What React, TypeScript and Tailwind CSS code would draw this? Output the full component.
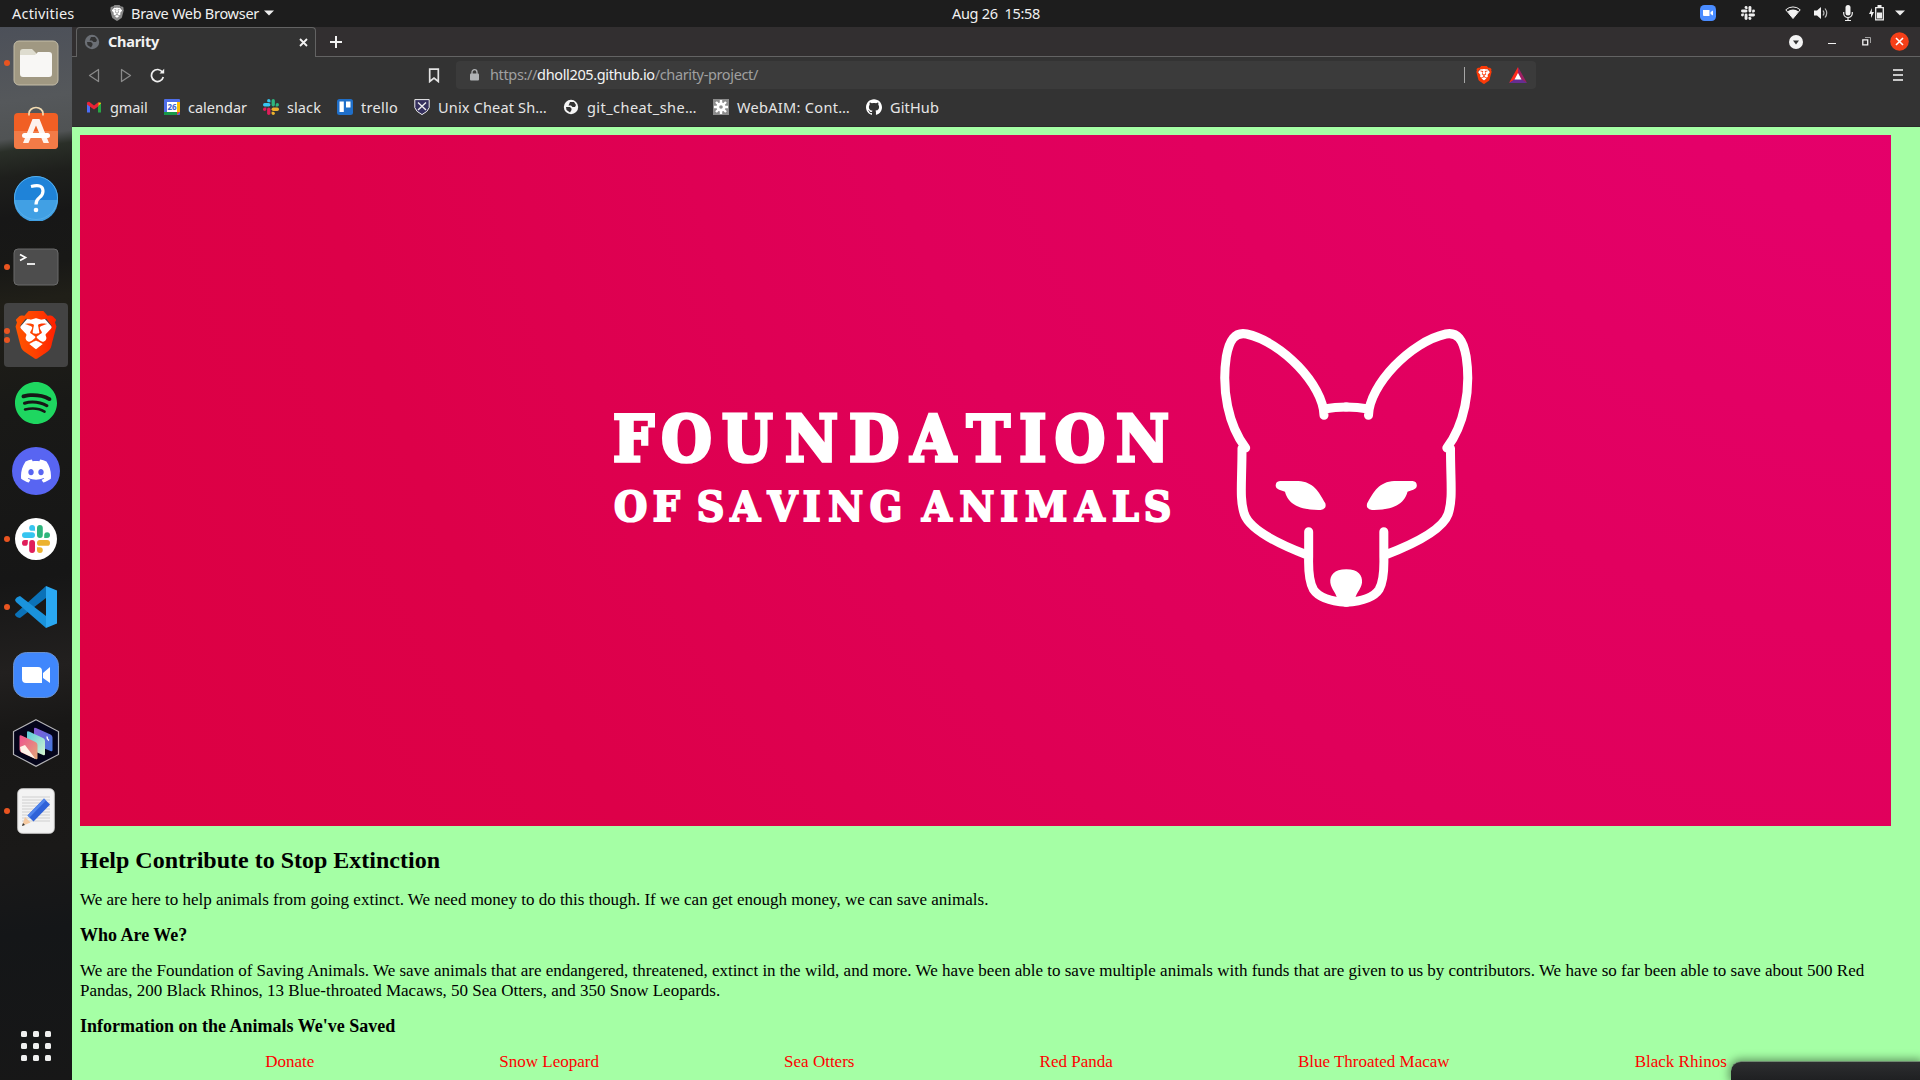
import { useLayoutEffect, useRef, type ReactNode } from "react";
import { SiBrave, SiSpotify, SiDiscord, SiGithub } from "react-icons/si";

/* Text run whose tracking is computed so that it fills the given width. */
function Fit({ w, className = "", children }: { w: number; className?: string; children: ReactNode }) {
  const ref = useRef<HTMLSpanElement>(null);
  useLayoutEffect(() => {
    const el = ref.current;
    if (!el) return;
    el.style.letterSpacing = "0px";
    const n = (el.textContent || "").length;
    el.style.letterSpacing = `${(w - el.getBoundingClientRect().width) / n}px`;
  }, [w]);
  return (
    <span ref={ref} className={`inline-block whitespace-pre ${className}`}>
      {children}
    </span>
  );
}

function SlackMark({ size, mono = false }: { size: number; mono?: boolean }) {
  const c = mono ? ["#eee", "#eee", "#eee", "#eee"] : ["#36c5f0", "#2eb67d", "#ecb22e", "#e01e5a"];
  return (
    <svg width={size} height={size} viewBox="0 0 28 28">
      {c.map((fill, i) => (
        <g key={i} fill={fill} transform={`rotate(${i * 90} 14 14)`}>
          <rect x="0" y="7.2" width="13" height="5.8" rx="2.9" />
          <path d="M13 5.8h-2.9A2.9 2.9 0 1 1 13 2.9z" />
        </g>
      ))}
    </svg>
  );
}

/* Brave shield: a coloured mask laid over a white face. */
function BraveMark({ size, tone }: { size: string; tone: string }) {
  return (
    <span className={`relative flex ${size}`}>
      <svg className="absolute inset-0 size-full" viewBox="0 0 24 24">
        <defs>
          <linearGradient id="braveFill" x1="0" x2="1">
            <stop offset="0" stopColor="#ff5601" />
            <stop offset=".5" stopColor="#ff4000" />
            <stop offset="1" stopColor="#ff1f01" />
          </linearGradient>
        </defs>
        <path d="M8 3.500h8l4 4.500-2 8-6 5-6-5-2-8z" fill="#fff" />
      </svg>
      <SiBrave className={`relative size-full ${tone}`} />
    </span>
  );
}

function TopBar() {
  return (
    <header className="flex h-[27px] shrink-0 items-center bg-[#1d1d1d] text-[14.5px] leading-none text-[#f0f0f0]">
      <div className="flex w-1/2 items-center pl-3">
        <div className="w-[97px]">
          <Fit w={62.500}>Activities</Fit>
        </div>
        <span className="mr-[6px] mb-px"><BraveMark size="size-4" tone="fill-[#8b8b8b]" /></span>
        <Fit w={128}>Brave Web Browser</Fit>
        <svg className="mb-px ml-[5px]" width="10" height="6" viewBox="0 0 10 6">
          <path d="M0 .5h10L5 5.500z" fill="#eee" />
        </svg>
      </div>
      <div className="-ml-2 flex-1">
        <Fit w={88}>Aug 26  15:58</Fit>
      </div>
      <div className="flex w-[220px] items-center pb-px">
        <svg width="16" height="16" viewBox="0 0 16 16">
          <rect width="16" height="16" rx="4.500" fill="#4a8cff" />
          <path d="M3 5h6.500v6H4a1 1 0 0 1-1-1zM10.500 7L13 5.500v5L10.500 9z" fill="#fff" />
        </svg>
        <span className="ml-[25px]"><SlackMark size={14} mono /></span>
        <svg className="ml-[30px]" width="16" height="14" viewBox="0 0 16 14">
          <path d="M.8 3.800a10.500 10.500 0 0 1 14.400 0L8 12.500z" fill="none" stroke="#eee" strokeWidth="1" />
          <path d="M2.500 5.500a8.500 8.500 0 0 1 11 0L8 12.500z" fill="#f2f2f2" />
        </svg>
        <svg className="ml-[13px]" width="16" height="14" viewBox="0 0 16 14">
          <path d="M0 4.500h3L7 1v12L3 9.500H0z" fill="#f2f2f2" />
          <path d="M9 4.500q2 2.500 0 5M11 2.500q3.500 4.500 0 9" fill="none" stroke="#bbb" strokeWidth="1.200" />
        </svg>
        <svg className="ml-[13px]" width="10" height="16" viewBox="0 0 10 16">
          <rect x="2.500" y="0" width="5" height="10.500" rx="2.500" fill="#f2f2f2" />
          <path d="M.7 7v1.500a4.300 4 0 0 0 8.600 0V7M5 12.500V15.500M2 15.500h6" fill="none" stroke="#eee" strokeWidth="1.200" />
        </svg>
        <svg className="ml-[16px]" width="15" height="16" viewBox="0 0 15 16">
          <path d="M3 3L0 9h2v4L5 7H2.800z" fill="#eee" />
          <path d="M6.700 2.700h7.600v12.100H6.700z" fill="none" stroke="#eee" strokeWidth="1.300" />
          <path d="M8.500 0h4v2.500h-4zM8 7.500h5v6H8z" fill="#eee" />
        </svg>
        <svg className="ml-[11px]" width="10" height="6" viewBox="0 0 10 6">
          <path d="M0 .5h10L5 5.500z" fill="#eee" />
        </svg>
      </div>
    </header>
  );
}

function FilesIcon() {
  return (
    <svg width="46" height="46" viewBox="0 0 46 46">
      <rect x="1" y="1" width="44" height="44" rx="5" fill="#a09882" stroke="#c4bda8" />
      <path d="M7 12q0-3 3-3h9l4 4v7H7z" fill="#dedccf" />
      <path d="M7 15h15l3-3h11q3 0 3 3v19q0 3-3 3H10q-3 0-3-3z" fill="#f8f7f5" />
    </svg>
  );
}

function SoftwareIcon() {
  return (
    <svg className="relative -top-[3px]" width="46" height="44" viewBox="0 0 46 44">
      <rect x="1" y="7" width="44" height="36" rx="4" fill="#f15f24" />
      <path d="M1 25h44v14q0 4-4 4H5q-4 0-4-4z" fill="#f37b47" />
      <path d="M16 9.500v-2a7 6 0 0 1 14 0v2" fill="none" stroke="#f3dcb2" strokeWidth="1.700" />
      <path d="M19.500 13h7L36 37h-5.500L23 19.500 15.500 37H10z" fill="#fff" fillOpacity=".92" />
      <rect x="9" y="27" width="28" height="5" rx="2.500" fill="#fff" />
    </svg>
  );
}

function HelpIcon() {
  return (
    <svg className="relative -top-px" width="46" height="46" viewBox="0 0 46 46">
      <circle cx="23" cy="23" r="22" fill="#1f83d8" />
      <path d="M1 25a22 22 0 0 0 44 0z" fill="#41a0e4" />
      <circle cx="23" cy="23" r="21.500" fill="none" stroke="#56aeea" />
      <path d="M18 11.500q12-3 12 4.500 0 4-3.500 6.500T23 29.500" fill="none" stroke="#fff" strokeWidth="3.200" />
      <circle cx="23" cy="35" r="2.300" fill="#fff" />
    </svg>
  );
}

function TerminalIcon() {
  return (
    <svg width="46" height="38" viewBox="0 0 46 38">
      <rect x="1" y="1" width="44" height="36" rx="4" fill="#4d4d4d" stroke="#6b6b6b" />
      <path d="M7 6.500l5.500 3L7 12.500" fill="none" stroke="#fff" strokeWidth="1.700" />
      <path d="M14 16h8" stroke="#fff" strokeWidth="1.700" />
    </svg>
  );
}

function SpotifyIcon() {
  return (
    <span className="rounded-full bg-[#171717]">
      <SiSpotify className="size-[42px] text-[#1ed760]" />
    </span>
  );
}

function DiscordIcon() {
  return (
    <span className="flex size-12 items-center justify-center rounded-full bg-[#5865f2]">
      <SiDiscord className="size-[30px] text-white" />
    </span>
  );
}

function SlackIcon() {
  return (
    <span className="flex size-[42px] items-center justify-center rounded-full bg-white">
      <SlackMark size={28} />
    </span>
  );
}

function CodeIcon() {
  return (
    <svg width="42" height="42" viewBox="0 0 42 42">
      <path d="M0 28L31 0v12L5 32q-5-1-5-4z" fill="#0b72b8" />
      <path d="M0 14q1-3 5-4l26 20v12L1 16z" fill="#1a93dc" />
      <path d="M31 0l11 4.500v33L31 42z" fill="#2aa8f2" />
    </svg>
  );
}

function ZoomIcon() {
  return (
    <svg width="46" height="46" viewBox="0 0 46 46">
      <rect x=".5" y=".5" width="45" height="45" rx="13" fill="#4087fc" stroke="#6a90cc" />
      <path d="M9 15h16q4 0 4 4v12H13q-4 0-4-4zM30 21l7-6v16l-7-5z" fill="#fff" />
    </svg>
  );
}

function HexIcon() {
  return (
    <svg width="48" height="48" viewBox="0 0 48 48">
      <defs>
        <linearGradient id="hexA" x1="0" y1="0" x2="1" y2="1"><stop offset="0" stopColor="#8a5ad8" /><stop offset="1" stopColor="#3f79dd" /></linearGradient>
        <linearGradient id="hexB" x1="0" y1="0" x2="1" y2="1"><stop offset="0" stopColor="#55c9d8" /><stop offset="1" stopColor="#d6f5d0" /></linearGradient>
        <linearGradient id="hexC" x1="0" y1="0" x2="1" y2="1"><stop offset="0" stopColor="#f0508e" /><stop offset="1" stopColor="#e0a878" /></linearGradient>
      </defs>
      <path d="M24 .8L46.500 12.500v23L24 47.200 1.500 35.500v-23z" fill="#04041a" stroke="#b5b5b8" strokeWidth="1.200" />
      <path d="M22 10q0-2 2-1l14.500 6.500q2 1 2 3V31q0 2-2 1L24 26q-2-1-2-3z" fill="url(#hexA)" />
      <path d="M15 13.500q0-2 2-1l14 6.500q2 1 2 3v13q0 2-2 1L17 30q-2-1-2-3z" fill="url(#hexB)" />
      <path d="M7.500 17.500q0-2 2-1l14 6.500q2 1 2 3v13q0 2-2 1L9.500 33.500q-2-1-2-3z" fill="url(#hexC)" />
      <path d="M8 28l5-2 10.500 14L9 33z" fill="#fff3e8" />
      <path d="M35 17.500q0 3 2 4" stroke="#fff" strokeWidth="1.500" fill="none" />
    </svg>
  );
}

function NotesIcon() {
  return (
    <svg width="38" height="46" viewBox="0 0 38 46">
      <rect x=".8" y=".8" width="36.400" height="44.400" rx="4.500" fill="#f3f3f3" stroke="#d8d8d8" />
      <path d="M5 9h28M5 12h28M5 15h28M5 18h28M5 21h28M5 24h28M5 27h28M5 30h28M5 33h28" stroke="#cfcfcf" />
      <path d="M5 38l3-9 5.500 5.500z" fill="#f5c9a0" />
      <path d="M5 38l1-3 2 2z" fill="#333" />
      <path d="M10.500 27.500L27 10.500l6 6L16.500 33.500z" fill="#2f62d8" />
      <path d="M10.500 27.500L27 10.500l2 2L12.500 29.500z" fill="#5084ec" />
    </svg>
  );
}

const dock: { icon: ReactNode; dots: number; active?: boolean }[] = [
  { icon: <FilesIcon />, dots: 1 },
  { icon: <SoftwareIcon />, dots: 0 },
  { icon: <HelpIcon />, dots: 0 },
  { icon: <TerminalIcon />, dots: 1 },
  { icon: <BraveMark size="size-12" tone="fill-[url(#braveFill)]" />, dots: 2, active: true },
  { icon: <SpotifyIcon />, dots: 0 },
  { icon: <DiscordIcon />, dots: 0 },
  { icon: <SlackIcon />, dots: 1 },
  { icon: <CodeIcon />, dots: 1 },
  { icon: <ZoomIcon />, dots: 0 },
  { icon: <HexIcon />, dots: 0 },
  { icon: <NotesIcon />, dots: 1 },
];

function Dock() {
  return (
    <aside className="flex w-[72px] shrink-0 flex-col items-center gap-1 bg-[linear-gradient(172deg,#4c5059_0px,#55585b_75px,#505354_112px,#2a2f28_124px,#1e1f1c_150px,#171717_190px,#181816_240px,#201f18_275px,#191917_380px,#161616_550px,#22201f_640px,#181716_700px,#1a1918_820px,#141618_900px,#171717_100%)] pt-1">
      {dock.map((d, i) => (
        <div
          key={i}
          className={`relative flex size-16 items-center justify-center rounded-[4px] ${d.active ? "bg-[#434343]" : ""}`}
        >
          <div className="absolute top-0 left-0 flex h-full flex-col justify-center gap-[3px]">
            {Array.from({ length: d.dots }, (_, k) => (
              <span key={k} className="size-[6px] rounded-full bg-[#e95420]" />
            ))}
          </div>
          {d.icon}
        </div>
      ))}
      <div className="mt-auto mb-[19px] grid grid-cols-3 gap-[6px]">
        {Array.from({ length: 9 }, (_, k) => (
          <span key={k} className="size-[6px] rounded-[1.5px] bg-[#efefef]" />
        ))}
      </div>
    </aside>
  );
}

function Globe({ fill, bg }: { fill: string; bg: string }) {
  return (
    <svg width="16" height="16" viewBox="0 0 16 16">
      <circle cx="8" cy="8" r="7.200" fill={fill} />
      <path d="M7 3h4l2 3-1 2H9.500L8 6.500H5.500zM3 8h4l1.500 1.500v1.500L7 13.500 3.500 11z" fill={bg} />
    </svg>
  );
}

function TabStrip() {
  return (
    <div className="flex h-[30px] shrink-0 bg-[#322f30]">
      <div className="w-1 border-b border-[#636363]" />
      <div className="flex w-[240px] items-center rounded-t-[4px] border-x border-t border-[#636363] bg-[#333] pb-px pl-[7px]">
        <Globe fill="#6b6f75" bg="#333" />
        <Fit w={51} className="ml-[8px] pb-px text-[14.5px] leading-none font-bold text-[#f2f2f2]">Charity</Fit>
        <svg className="mr-[7px] ml-auto" width="9" height="9" viewBox="0 0 9 9">
          <path d="M1 1l7 7M8 1L1 8" stroke="#f2f2f2" strokeWidth="1.800" />
        </svg>
      </div>
      <div className="flex flex-1 items-center border-b border-[#636363] pl-[14px]">
        <svg width="12" height="12" viewBox="0 0 12 12">
          <path d="M6 0v12M0 6h12" stroke="#f2f2f2" strokeWidth="2" />
        </svg>
        <svg className="ml-auto" width="14" height="14" viewBox="0 0 14 14">
          <circle cx="7" cy="7" r="7" fill="#f4f4f4" />
          <path d="M4 5.500h6L7 9.500z" fill="#333" />
        </svg>
        <span className="mt-[4px] ml-[25px] h-px w-2 bg-[#f2f2f2]" />
        <svg className="ml-[26px]" width="9" height="9" viewBox="0 0 9 9">
          <path d="M3 .5h5.500V6" fill="none" stroke="#a0a0a0" />
          <path d="M.8 2.800h4.900v5H.8z" fill="none" stroke="#f4f4f4" strokeWidth="1.300" />
        </svg>
        <svg className="mr-[11px] mb-px ml-[19px]" width="19" height="19" viewBox="0 0 19 19">
          <circle cx="9.500" cy="9.500" r="9.300" fill="#f63f18" />
          <path d="M6 6l7 7M13 6l-7 7" stroke="#fff" strokeWidth="1.600" />
        </svg>
      </div>
    </div>
  );
}

function Toolbar() {
  return (
    <div className="flex h-9 shrink-0 items-center bg-[#333]">
      <svg className="ml-4" width="12" height="15" viewBox="0 0 12 15">
        <path d="M10.500 1.500v12L1.500 7.500z" fill="none" stroke="#8a8a8a" strokeWidth="1.300" strokeLinejoin="round" />
      </svg>
      <svg className="ml-5" width="12" height="15" viewBox="0 0 12 15">
        <path d="M1.500 1.500v12l9-6z" fill="none" stroke="#8a8a8a" strokeWidth="1.300" strokeLinejoin="round" />
      </svg>
      <svg className="ml-[18px]" width="15" height="15" viewBox="0 0 15 15">
        <path d="M12.500 4.200A6 6 0 1 0 13.300 9" fill="none" stroke="#f0f0f0" strokeWidth="1.700" />
        <path d="M9.500 5.500h4.700V.8z" fill="#f0f0f0" />
      </svg>
      <svg className="ml-[263px]" width="12" height="15" viewBox="0 0 12 15">
        <path d="M1.700 1.200h8.600v12.300L6 10 1.700 13.500z" fill="none" stroke="#e4e4e4" strokeWidth="1.700" />
      </svg>
      <div className="ml-4 flex h-7 w-[1080px] items-center rounded-[4px] bg-[#3b3b3b] pl-[14px]">
        <svg width="9" height="12" viewBox="0 0 9 12">
          <rect y="4.500" width="9" height="7" rx="1" fill="#b0b3b6" />
          <path d="M2 5V3.200a2.500 2.500 0 0 1 5 0V5" fill="none" stroke="#b0b3b6" strokeWidth="1.300" />
        </svg>
        <Fit w={268} className="ml-[11px] pb-0.5 text-[14.5px] leading-none text-[#a0a0a0]">
          https://<span className="text-[#f4f4f4]">dholl205.github.io</span>/charity-project/
        </Fit>
        <span className="ml-auto h-4 w-px bg-[#a6a6a6]" />
        <span className="ml-[10px]"><BraveMark size="size-[18px]" tone="fill-[#fb3a08]" /></span>
        <svg className="mr-[9px] ml-[16px]" width="18" height="16" viewBox="0 0 18 16">
          <path d="M9 0L0 16l9-5z" fill="#ff2a1c" />
          <path d="M9 0l9 16-9-5z" fill="#9e1f63" />
          <path d="M0 16h18l-9-6z" fill="#662d91" />
          <path d="M9 6l3.500 6.500h-7z" fill="#fff" />
        </svg>
      </div>
      <div className="mr-[17px] ml-auto flex flex-col gap-[3px]">
        <span className="h-[2px] w-[10px] bg-[#c8c8c8]" />
        <span className="h-[2px] w-[10px] bg-[#c8c8c8]" />
        <span className="h-[2px] w-[10px] bg-[#c8c8c8]" />
      </div>
    </div>
  );
}

const bookmarks: { label: string; text: number; slot: string; icon: ReactNode }[] = [
  {
    label: "gmail", text: 37.5, slot: "w-[78px]",
    icon: (
      <svg width="16" height="16" viewBox="0 0 16 16">
        <path d="M1 3.500v10h3V6z" fill="#4c6ef5" /><path d="M15 3.500v10h-3V6z" fill="#28a745" />
        <path d="M12 3.500h1.500Q15 3 15 4.500L12 7z" fill="#fbbc04" />
        <path d="M1 4.500Q1 2 3.500 3L8 6.500 12.500 3v4.200L8 10.500 1 5.500z" fill="#ea2335" />
      </svg>
    ),
  },
  {
    label: "calendar", text: 59, slot: "w-[99px]",
    icon: (
      <svg width="16" height="16" viewBox="0 0 16 16">
        <rect width="16" height="16" rx="1" fill="#4f6ee8" />
        <path d="M13 3h3v10h-3z" fill="#fbbc04" /><path d="M0 13h13v3H1q-1 0-1-1z" fill="#189a48" />
        <path d="M13 13h3l-3 3z" fill="#ea4335" /><path d="M3 3h10v10H3z" fill="#fff" />
        <text x="8" y="11" textAnchor="middle" fontSize="8" fontWeight="700" fill="#3a5fd0" fontFamily="Noto Sans">26</text>
      </svg>
    ),
  },
  { label: "slack", text: 34, slot: "w-[74px]", icon: <SlackMark size={16} /> },
  {
    label: "trello", text: 37, slot: "w-[77px]",
    icon: (
      <svg width="16" height="16" viewBox="0 0 16 16">
        <rect width="16" height="16" rx="2.500" fill="#1f6fc9" />
        <path d="M2.500 2.500h4.300v10.500H2.500zM9 2.500h4.500v6H9z" fill="#fff" />
      </svg>
    ),
  },
  {
    label: "Unix Cheat Sh…", text: 109, slot: "w-[149px]",
    icon: (
      <svg width="16" height="16" viewBox="0 0 16 16">
        <path d="M.8.6h14.400v8q-1 4-7.200 7-6.200-3-7.200-7z" fill="#35305e" stroke="#eee" />
        <path d="M4 3.500l8 7.500M12 3.500L4 11" stroke="#eee" strokeWidth="1.400" />
      </svg>
    ),
  },
  { label: "git_cheat_she…", text: 110, slot: "w-[150px]", icon: <Globe fill="#f6f6f6" bg="#333" /> },
  {
    label: "WebAIM: Cont…", text: 113, slot: "w-[153px]",
    icon: (
      <svg width="16" height="16" viewBox="0 0 16 16">
        <rect width="16" height="16" fill="#8d8d8d" />
        <path d="M8 1v14M1 8h14M3 3l10 10M13 3L3 13" stroke="#fff" strokeWidth="2.400" />
        <circle cx="8" cy="8" r="4.500" fill="#fff" /><circle cx="8" cy="8" r="1.800" fill="#8d8d8d" />
      </svg>
    ),
  },
  { label: "GitHub", text: 49, slot: "w-[80px]", icon: <SiGithub className="size-4 text-white" /> },
];

function BookmarksBar() {
  return (
    <nav className="flex h-[34px] shrink-0 items-center border-b border-[#2a2a2a] bg-[#333] pb-[5px] pl-[14px] text-[14.5px] leading-none text-[#e6e6e6]">
      {bookmarks.map((b) => (
        <div key={b.label} className={`flex shrink-0 items-center gap-2 ${b.slot}`}>
          <span className="flex size-4">{b.icon}</span>
          <Fit w={b.text}>{b.label}</Fit>
        </div>
      ))}
    </nav>
  );
}

const SQUEEZE = 0.92;
const line1 = [33.5, 86.5, 147.3, 211.4, 274.2, 333.1, 388.2, 432.8, 479.9, 542.6];
const line2 = [30.6, 66.2, 88, 110.6, 145.4, 182.5, 211.6, 245.7, 285.9, 310, 336.8, 377, 409.1, 446.2, 489.9, 525.4, 557.6];
const spread = (xs: number[]) => xs.map((x) => ((x - 15) / SQUEEZE).toFixed(1)).join(" ");

function FoxHalf() {
  return (
    <>
      <path
        d="M372 316C370 225 245 95 140 72C105 65 88 90 79 140C64 240 85 345 137 414M126 415C126 520 118 565 133 612C148 655 225 698 322 735M326 665V740Q324 810 340 838Q362 872 440 877M372 297Q405 291 440 291"
        fill="none" stroke="#fff" strokeWidth="27" strokeLinecap="round" strokeLinejoin="round"
      />
      <path d="M240 513H295C340 515 356 545 376 580C380 594 372 600 355 600C300 599 264 582 255 545C245 540 228 540 227 527Q227 514 240 513Z" fill="#fff" />
    </>
  );
}

function Banner() {
  return (
    <div className="h-[691px] w-[1811px] bg-[radial-gradient(circle_at_1900px_-340px,#e7006d_0px,#e40069_450px,#e2005f_850px,#e0005a_1150px,#dd0049_1700px,#dc0042_2150px)]">
      <svg width="1811" height="691" viewBox="0 0 1811 691">
        <g transform={`translate(535 0) scale(${SQUEEZE} 1)`} fill="#fff" stroke="#fff" fontFamily="'DejaVu Serif'" fontWeight="700" textAnchor="middle">
          <text x={spread(line1)} y="326.500" fontSize="63" strokeWidth="3.600">FOUNDATION</text>
          <text x={spread(line2)} y="386" fontSize="41.500" strokeWidth="2.200">OF SAVING ANIMALS</text>
        </g>
        <g transform="translate(1120 175) scale(.33333)">
          <FoxHalf />
          <g transform="translate(877.500 0) scale(-1 1)"><FoxHalf /></g>
          <path d="M439 778C475 778 488 797 486 818C483 840 466 848 462 880H415C411 848 394 840 391 818C389 797 402 778 439 778Z" fill="#fff" />
        </g>
      </svg>
    </div>
  );
}

const links = ["Donate", "Snow Leopard", "Sea Otters", "Red Panda", "Blue Throated Macaw", "Black Rhinos"];

function Page() {
  return (
    <main className="min-h-0 flex-1 overflow-hidden bg-[#a5ffa5] p-2 font-['Liberation_Serif',serif] text-[17px] leading-5 text-black">
      <Banner />
      <h2 className="mt-5 text-[24px] leading-7 font-bold">Help Contribute to Stop Extinction</h2>
      <p className="mt-4">
        We are here to help animals from going extinct. We need money to do this though. If we can get enough money, we can save animals.
      </p>
      <h3 className="mt-[15px] text-[18px] leading-[21px] font-bold">Who Are We?</h3>
      <p className="mt-[15px]">
        We are the Foundation of Saving Animals. We save animals that are endangered, threatened, extinct in the wild, and more. We have been able to save multiple animals with funds that are given to us by contributors. We have so far been able to save about 500 Red Pandas, 200 Black Rhinos, 13 Blue-throated Macaws, 50 Sea Otters, and 350 Snow Leopards.
      </p>
      <h3 className="mt-[15px] text-[18px] leading-[21px] font-bold">Information on the Animals We've Saved</h3>
      <nav className="mt-[15px] flex justify-evenly text-[#ff0000]">
        {links.map((l) => (
          <a key={l}>{l}</a>
        ))}
      </nav>
    </main>
  );
}

export default function App() {
  return (
    <div className="relative flex h-[1080px] w-[1920px] flex-col overflow-hidden font-['Noto_Sans',sans-serif]">
      <TopBar />
      <div className="flex min-h-0 flex-1">
        <Dock />
        <div className="flex min-w-0 flex-1 flex-col">
          <TabStrip />
          <Toolbar />
          <BookmarksBar />
          <Page />
        </div>
      </div>
      <div className="absolute right-0 bottom-0 h-[19px] w-[189px] rounded-tl-[10px] border-t border-[#6f8a70] bg-linear-to-b from-[#2d2e30] to-[#1f2022] shadow-[0_0_9px_2px_rgba(0,0,0,0.4)]" />
    </div>
  );
}
